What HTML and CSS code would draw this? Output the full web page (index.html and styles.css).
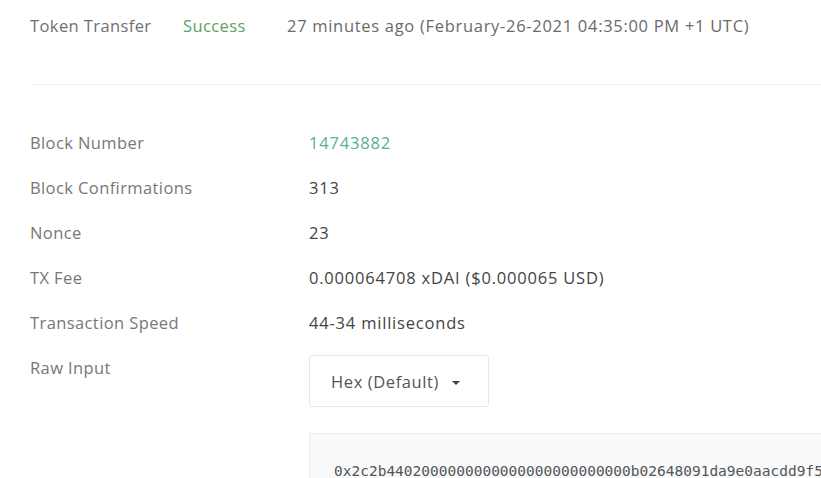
FILE: index.html
```html
<!DOCTYPE html>
<html lang="en">
<head>
    <meta charset="UTF-8">
    <meta name="viewport" content="width=device-width, initial-scale=1.0">
    <title>Transaction Details</title>
    <link rel="stylesheet" href="styles.css">
</head>
<body>

    <!-- Transaction summary -->
    <div class="tx-page">
        <div class="tx-summary">
            <span class="tx-type">Token Transfer</span>
            <span class="tx-status">Success</span>
            <span class="tx-time">27 minutes ago (February-26-2021 04:35:00 PM +1 UTC)</span>
        </div>

        <hr class="divider">

        <!-- Detail rows -->
        <div class="details">
            <div class="row">
                <div class="label">Block Number</div>
                <div class="value link">14743882</div>
            </div>
            <div class="row">
                <div class="label">Block Confirmations</div>
                <div class="value">313</div>
            </div>
            <div class="row">
                <div class="label">Nonce</div>
                <div class="value">23</div>
            </div>
            <div class="row">
                <div class="label">TX Fee</div>
                <div class="value">0.000064708 xDAI ($0.000065 USD)</div>
            </div>
            <div class="row">
                <div class="label">Transaction Speed</div>
                <div class="value">44-34 milliseconds</div>
            </div>
            <div class="row row-input">
                <div class="label">Raw Input</div>
                <div class="value input-value">
                    <button class="format-btn">Hex (Default) <span class="caret"></span></button>
                    <pre class="raw-box">0x2c2b4402000000000000000000000000b02648091da9e0aacdd9f5e2a1c7b80c1d4e6f3a</pre>
                </div>
            </div>
        </div>
    </div>

</body>
</html>
```

FILE: styles.css
```css
/* General Styling */
body {
    font-family: 'Open Sans', sans-serif;
    background: #fff;
    margin: 0;
    padding: 0;
    overflow: hidden;
}

.tx-page {
    padding-left: 30px;
    width: 791px;
}

/* Summary line */
.tx-summary {
    display: flex;
    align-items: center;
    height: 50px;
    font-size: 16.5px;
    letter-spacing: 0.4px;
    color: #707070;
}

.tx-type {
    width: 153px;
}

.tx-status {
    width: 104px;
    color: #5ba264;
}

.tx-time {
    color: #6a6a6a;
    letter-spacing: 0.7px;
}

.divider {
    border: none;
    border-top: 1px solid #f3f3f3;
    margin: 34px 0 35px 0;
}

/* Detail rows */
.row {
    display: flex;
    font-size: 16.5px;
    letter-spacing: 0.4px;
    line-height: 21px;
}

.label {
    width: 279px;
    flex-shrink: 0;
    padding: 12px 0;
    color: #777;
}

.value {
    padding: 12px 0;
    color: #444;
    letter-spacing: 0.8px;
}

.value.link {
    color: #52b09d;
}

.row-input {
    align-items: flex-start;
}

.input-value {
    padding-top: 10px;
    flex: 1;
    min-width: 0;
}

/* Raw input */
.format-btn {
    font-family: 'Open Sans', sans-serif;
    font-size: 16.5px;
    letter-spacing: 0.6px;
    color: #555;
    background: #fff;
    border: 1px solid #e6e6e6;
    border-radius: 3px;
    width: 180px;
    height: 52px;
    padding: 0 0 0 21px;
    text-align: left;
    cursor: pointer;
}

.caret {
    display: inline-block;
    width: 0;
    height: 0;
    margin-left: 8px;
    vertical-align: middle;
    border-left: 4px solid transparent;
    border-right: 4px solid transparent;
    border-top: 4px solid #444;
}

.raw-box {
    margin: 26px 0 0 0;
    padding: 27px 24px 20px 24px;
    background: #f8f9fa;
    border: 1px solid #ececec;
    border-right: none;
    border-radius: 3px 0 0 3px;
    font-family: 'DejaVu Sans Mono', monospace;
    font-size: 14.5px;
    letter-spacing: 0;
    color: #555;
    white-space: nowrap;
    overflow: hidden;
}
```
